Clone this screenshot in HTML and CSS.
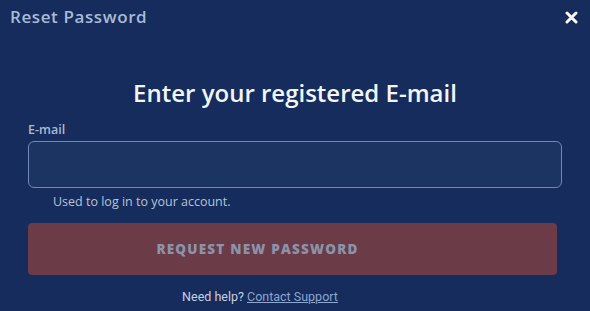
FILE: index.html
```html
<!DOCTYPE html>
<html lang="en">
<head>
<meta charset="utf-8">
<title>Reset Password</title>
<link rel="stylesheet" href="styles.css">
</head>
<body>
<div class="modal">
  <header class="modal-head">
    <h1 class="modal-title">Reset Password</h1>
    <button class="close" aria-label="Close">
      <svg width="13" height="13" viewBox="0 0 13 13"><path d="M2 2 L11 11 M11 2 L2 11" stroke="#fff" stroke-width="3" stroke-linecap="round"/></svg>
    </button>
  </header>
  <h2 class="heading">Enter your registered E-mail</h2>
  <form class="form">
    <label class="label" for="email">E-mail</label>
    <input class="input" id="email" type="email">
    <p class="hint">Used to log in to your account.</p>
    <button type="button" class="submit">REQUEST NEW PASSWORD</button>
    <p class="help">Need help? <a href="#">Contact Support</a></p>
  </form>
</div>
</body>
</html>
```

FILE: styles.css
```css
* { box-sizing: border-box; }
html, body { margin: 0; padding: 0; }
body {
  width: 590px;
  height: 311px;
  background: #152c5c;
  font-family: "Open Sans", Lato, sans-serif;
  overflow: hidden;
}
.modal { padding: 0 28px 0 28px; }
.modal-head {
  display: flex;
  justify-content: space-between;
  align-items: center;
  margin: 0 -16px 0 -18px;
  height: 34px;
}
.modal-title {
  margin: 0;
  font-size: 17px;
  font-weight: 600;
  letter-spacing: 0.6px;
  color: #a8bbd5;
  line-height: 20px;
}
.close {
  background: none;
  border: 0;
  padding: 0;
  display: flex;
  width: 13px;
  height: 13px;
}
.heading {
  margin: 44px 0 0 0;
  text-align: center;
  font-size: 24px;
  font-weight: 600;
  color: #f2f5fa;
  line-height: 30px;
}
.form { display: flex; flex-direction: column; }
.label {
  margin-top: 14px;
  font-size: 12.5px;
  font-weight: 600;
  color: #a8bbd5;
  line-height: 16px;
}
.input {
  margin-top: 3px;
  height: 47px;
  width: 534px;
  background: #1c3462;
  border: 1px solid #7088ba;
  border-radius: 6px;
}
.hint {
  margin: 6px 0 0 25px;
  font-size: 12.5px;
  color: #b7c4da;
  line-height: 16px;
}
.submit {
  margin-top: 13px;
  width: 529px;
  height: 52px;
  border: 0;
  border-radius: 4px;
  background: #6b3b47;
  color: #8b93a9;
  font-family: "Open Sans", sans-serif;
  font-weight: 800;
  font-size: 13.5px;
  letter-spacing: 1.2px;
  padding: 0 70px 0 0;
}
.help {
  margin: 14px 0 0 0;
  padding-right: 70px;
  text-align: center;
  font-family: Roboto, sans-serif;
  font-size: 12.5px;
  color: #c6d0e2;
}
.help a { color: #8fa6cf; }
```
